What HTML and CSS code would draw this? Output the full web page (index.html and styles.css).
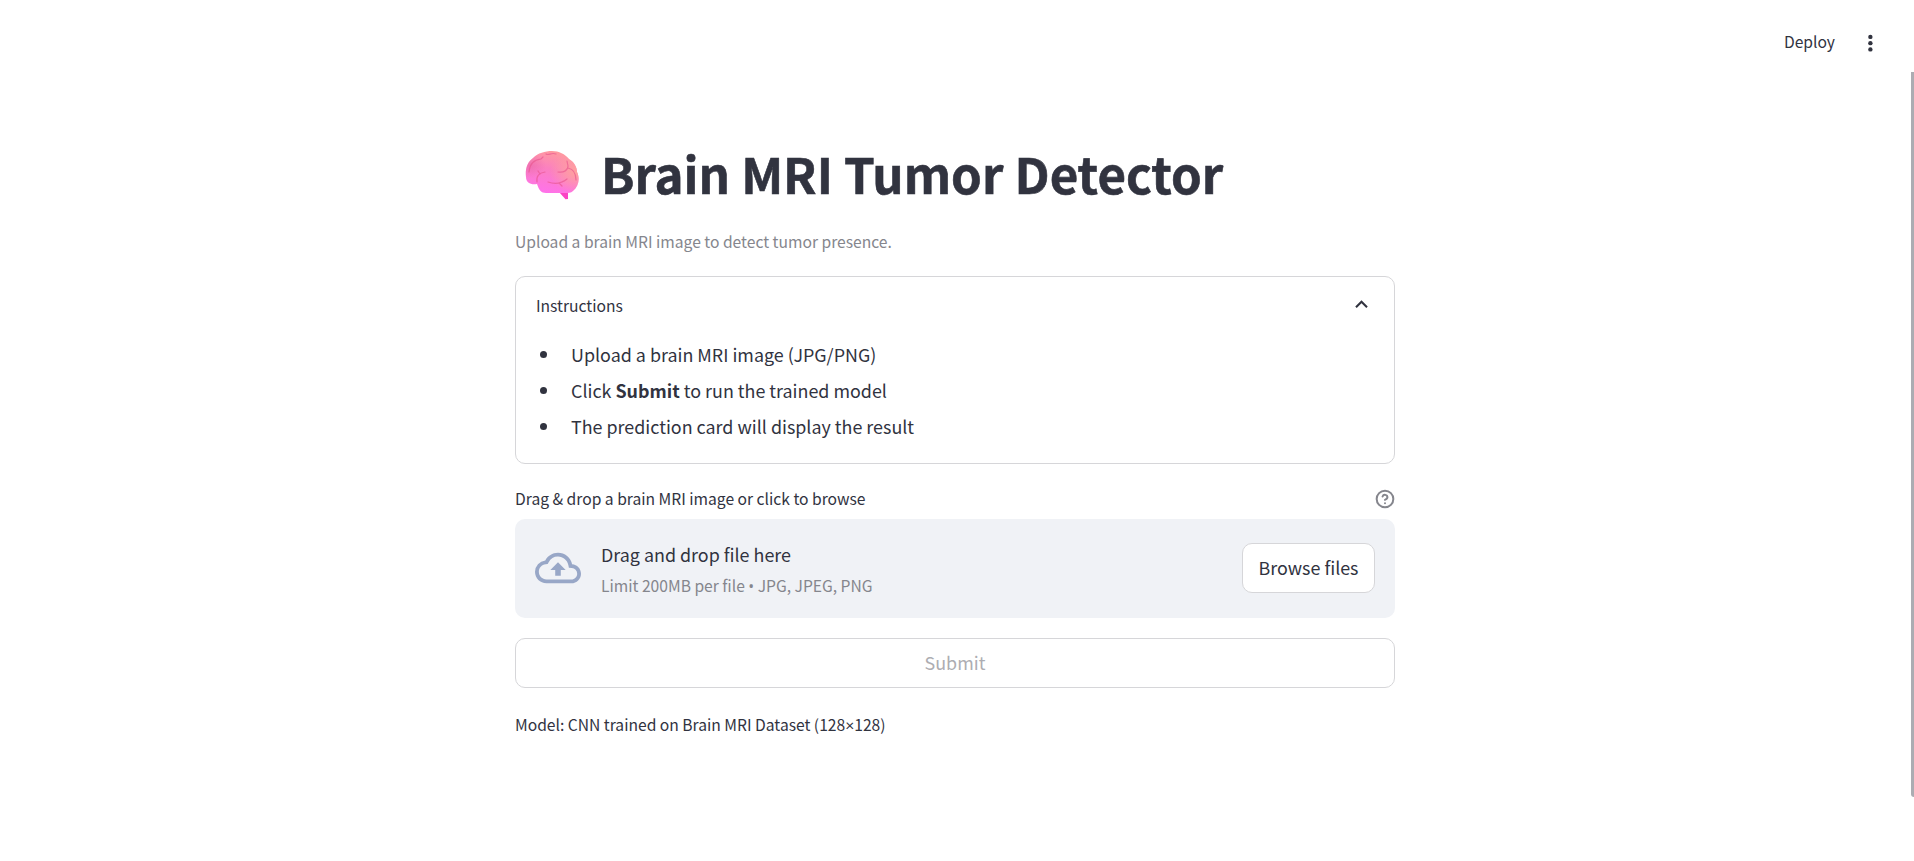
FILE: index.html
```html
<!DOCTYPE html>
<html lang="en">
<head>
<meta charset="utf-8">
<title>Brain MRI Tumor Detector</title>
<link rel="stylesheet" href="styles.css">
</head>
<body>
<header class="toolbar">
  <button class="deploy">Deploy</button>
  <button class="menu" aria-label="Menu"><svg width="30" height="30" viewBox="0 0 24 24"><circle cx="12.3" cy="7.1" r="1.75"/><circle cx="12.3" cy="12.1" r="1.75"/><circle cx="12.3" cy="17.1" r="1.75"/></svg></button>
</header>
<main class="content">
  <h1 class="title">
    <svg class="brain" width="54" height="50" viewBox="0 0 54 50">
      <defs>
        <linearGradient id="lobe" x1="0.65" y1="0" x2="0.4" y2="1"><stop offset="0" stop-color="#ff9c9c"/><stop offset="0.45" stop-color="#fb80c0"/><stop offset="1" stop-color="#ff72ea"/></linearGradient>
        <radialGradient id="warm" cx="0.95" cy="0.5" r="0.5"><stop offset="0" stop-color="#ffa29e"/><stop offset="1" stop-color="#ffa29e" stop-opacity="0"/></radialGradient>
        <radialGradient id="shade" cx="0.08" cy="0.35" r="0.3"><stop offset="0" stop-color="#e2609f" stop-opacity="0.45"/><stop offset="1" stop-color="#e2609f" stop-opacity="0"/></radialGradient>
        <path id="shape" d="M1 27 C0 20 2 12 8 8 C13 3 20 1 27 1 C34 1 40 4 44 9 C49 12 52 17 52 22 C55 28 54 36 48 41 C46 43 43 43 40 43 L21 43 C16 43 14 40 12 34 C6 35 1 33 1 27Z"/>
      </defs>
      <path d="M34 42 L40.5 49.2 L43 49 L43 41Z" fill="#fb43c4"/>
      <use href="#shape" fill="url(#lobe)"/>
      <use href="#shape" fill="url(#warm)"/>
      <use href="#shape" fill="url(#shade)"/>
      <g fill="none" stroke="#e9568f" stroke-width="1.2" stroke-linecap="round" opacity="0.65">
        <path d="M4 22 C5 13 9 10 16 9 L18 7"/><path d="M21 4 C24 6 26 2 31 4"/><path d="M33 22 C39 23 43 20 43 16 L42 11 M43 18 C48 19 51 23 51 30"/><path d="M12 32 C11 26 14 23 20 22 M15 24 L13 21"/><path d="M23 32 C29 34 36 34 42 29 M34 33 L37 36"/>
      </g>
    </svg>
    <span class="title-text">Brain MRI Tumor Detector</span>
  </h1>
  <p class="caption">Upload a brain MRI image to detect tumor presence.</p>
  <section class="expander">
    <div class="expander-head"><span>Instructions</span>
      <svg class="chevron" width="25" height="25" viewBox="0 0 24 24"><path d="M12 8l-6 6 1.41 1.41L12 10.83l4.59 4.58L18 14z"/></svg>
    </div>
    <ul class="steps">
      <li><span>Upload a brain MRI image (JPG/PNG)</span></li>
      <li><span>Click <strong>Submit</strong> to run the trained model</span></li>
      <li><span>The prediction card will display the result</span></li>
    </ul>
  </section>
  <div class="label"><span>Drag &amp; drop a brain MRI image or click to browse</span>
    <svg width="20" height="20" viewBox="0 0 24 24" fill="none" stroke="#85868d" stroke-width="2.4" stroke-linecap="round" stroke-linejoin="round"><circle cx="12" cy="12" r="10"/><path d="M9.09 9a3 3 0 0 1 5.83 1c0 2-3 3-3 3"/><path d="M12 17h.01"/></svg>
  </div>
  <section class="dropzone">
    <svg class="cloud" width="46" height="46" viewBox="0 0 24 24"><path d="M19.35 10.04A7.49 7.49 0 0 0 12 4C9.11 4 6.6 5.64 5.35 8.04A5.994 5.994 0 0 0 0 14c0 3.31 2.69 6 6 6h13c2.76 0 5-2.24 5-5 0-2.64-2.05-4.78-4.65-4.96zM19 18H6c-2.21 0-4-1.79-4-4 0-2.05 1.53-3.76 3.56-3.97l1.07-.11.5-.95A5.469 5.469 0 0 1 12 6c2.62 0 4.88 1.86 5.39 4.43l.3 1.5 1.53.11A2.98 2.98 0 0 1 22 15c0 1.65-1.35 3-3 3zM8 13h2.55v3h2.9v-3H16l-4-4z"/></svg>
    <div class="drop-text"><div class="drop-main">Drag and drop file here</div><div class="drop-limit">Limit 200MB per file <span class="dot">•</span> JPG, JPEG, PNG</div></div>
    <button class="button browse">Browse files</button>
  </section>
  <button class="button submit" disabled>Submit</button>
  <p class="footnote">Model: CNN trained on Brain MRI Dataset (128<span class="times">×</span>128)</p>
</main>
<div class="scrollbar"></div>
</body>
</html>
```
FILE: styles.css
```css
* { box-sizing: border-box; }
html, body { margin: 0; height: 100%; overflow: hidden; }
body { font-family: "Noto Sans CJK SC", "Noto Sans CJK JP", "Noto Sans", sans-serif; font-size: 17.9px; color: #31333f; background: #fff; }
button { font: inherit; color: inherit; border: 0; background: none; padding: 0; }
p, h1, ul { margin: 0; padding: 0; }
.toolbar { display: flex; justify-content: flex-end; align-items: center; gap: 20px; height: 75px; padding: 10px 29px 0 0; }
.deploy { font-size: 15.64px; line-height: 24px; padding-bottom: 2px; }
.menu { display: flex; fill: #31333f; }
.content { width: 880px; margin: 0 auto 0 515px; }
.title { display: flex; align-items: center; gap: 22px; height: 66px; margin-top: 67px; padding-left: 10px; }
.title-text { padding-bottom: 5px; font-size: 49.2px; font-weight: 700; line-height: 61px; white-space: nowrap; -webkit-text-stroke: 0.6px #31333f; }
.caption { margin-top: 20px; font-size: 15.64px; line-height: 28px; color: #85868d; }
.expander { margin-top: 20px; height: 188px; border: 1px solid #d6d6d9; border-radius: 10px; }
.expander-head { display: flex; justify-content: space-between; align-items: center; height: 59px; padding: 0 20px 2px; font-size: 15.64px; }
.chevron { fill: #31333f; margin-bottom: 3px; }
.steps { list-style: none; }
.steps li { display: flex; align-items: center; gap: 24px; height: 36px; padding-left: 24px; }
.steps li::before { content: ""; width: 7px; height: 7px; border-radius: 50%; background: #31333f; }
.label { display: flex; justify-content: space-between; align-items: center; height: 30px; margin-top: 20px; font-size: 15.64px; }
.label span { padding-bottom: 1px; }
.dropzone { display: flex; align-items: center; gap: 20px; height: 99px; margin-top: 5px; padding: 0 20px 1px; background: #f0f2f6; border-radius: 10px; }
.cloud { fill: #98a7c7; }
.drop-text { flex: 1; padding-top: 4px; }
.drop-main { line-height: 31px; }
.drop-limit { font-size: 15.64px; line-height: 31px; color: #85868d; }
.dot { font-family: "Open Sans", "Noto Sans", sans-serif; line-height: 1; }
.times { font-family: Lato, "Noto Sans", sans-serif; line-height: 1; }
.button { height: 50px; padding-bottom: 2px; background: #fff; border: 1px solid #d6d6d9; border-radius: 10px; }
.browse { width: 133px; }
.submit { display: block; width: 100%; margin-top: 20px; color: #adadb2; }
.footnote { margin-top: 23px; font-size: 15.64px; line-height: 28px; }
.scrollbar { position: absolute; right: 0; top: 72px; width: 3px; height: 725px; background: #acacb2; border-radius: 0 0 0 3px; }
```
